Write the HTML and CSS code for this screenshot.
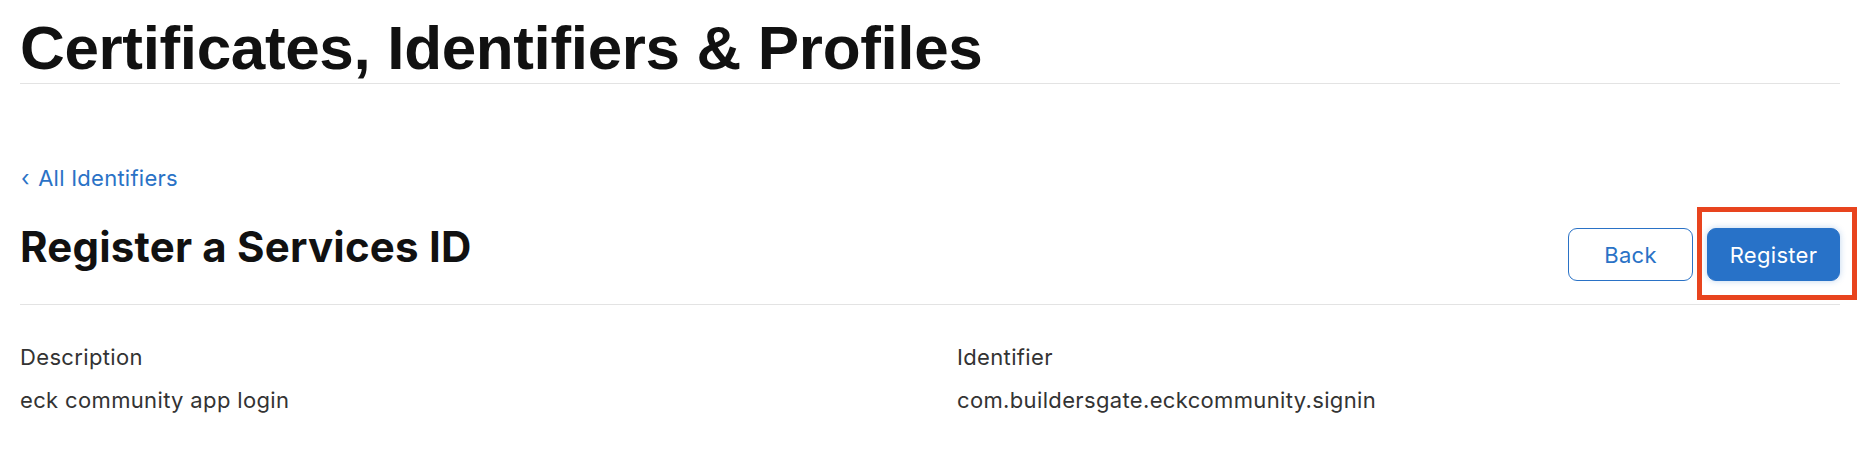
FILE: index.html
```html
<!DOCTYPE html>
<html lang="en">
<head>
<meta charset="utf-8">
<title>Certificates, Identifiers &amp; Profiles</title>
<link rel="stylesheet" href="styles.css">
</head>
<body>
<div class="page">
  <header class="page-header">
    <h1 class="page-title">Certificates, Identifiers &amp; Profiles</h1>
  </header>
  <a class="back-link" href="#"><span class="chev">&#8249;</span> All Identifiers</a>
  <div class="section-head">
    <h2 class="section-title">Register a Services ID</h2>
    <div class="actions">
      <button class="btn btn-secondary">Back</button>
      <div class="highlight-wrap">
        <button class="btn btn-primary">Register</button>
        <span class="highlight-box"></span>
      </div>
    </div>
  </div>
  <div class="details">
    <div class="field">
      <div class="field-label">Description</div>
      <div class="field-value">eck community app login</div>
    </div>
    <div class="field">
      <div class="field-label">Identifier</div>
      <div class="field-value">com.buildersgate.eckcommunity.signin</div>
    </div>
  </div>
</div>
</body>
</html>
```
FILE: styles.css
```css
html, body {
  margin: 0;
  padding: 0;
  background: #ffffff;
}
body {
  font-family: Inter, "Noto Sans", "Liberation Sans", sans-serif;
  color: #333333;
}
.page {
  padding: 13px 30px 0 20px;
}
.page-header {
  border-bottom: 1px solid #e3e3e3;
}
.page-title {
  margin: 0;
  font-family: "Liberation Sans", Arial, sans-serif;
  font-weight: 700;
  font-size: 62px;
  line-height: 70px;
  letter-spacing: -0.35px;
  color: #111111;
}
.back-link {
  display: block;
  margin-top: 81px;
  font-size: 22px;
  line-height: 26px;
  letter-spacing: 0.25px;
  color: #2a72c6;
  text-decoration: none;
}
.chev {
  display: inline-block;
  margin-left: 1px;
  margin-right: 2px;
}
.section-head {
  display: flex;
  justify-content: space-between;
  align-items: flex-start;
  margin-top: 31px;
  padding-bottom: 23px;
  border-bottom: 1px solid #e3e3e3;
}
.section-title {
  margin: 0;
  font-weight: 700;
  font-size: 42px;
  line-height: 50px;
  letter-spacing: 0.2px;
  color: #111111;
}
.actions {
  display: flex;
  gap: 14px;
  margin-top: 6px;
}
.btn {
  height: 53px;
  font-family: inherit;
  font-size: 22px;
  letter-spacing: 0.3px;
  border-radius: 9px;
  cursor: pointer;
  padding: 0;
}
.btn-secondary {
  width: 125px;
  background: #ffffff;
  border: 1px solid #2a72c6;
  color: #2a72c6;
}
.btn-primary {
  width: 133px;
  background: #2872c8;
  border: 1px solid #2872c8;
  color: #ffffff;
  box-shadow: 0 0 6px rgba(40, 114, 200, 0.3);
}
.highlight-wrap {
  position: relative;
  display: flex;
}
.highlight-box {
  position: absolute;
  top: -21px;
  left: -10px;
  right: -17px;
  bottom: -19px;
  border: 5px solid #e8441e;
  pointer-events: none;
}
.details {
  display: grid;
  grid-template-columns: 937px 1fr;
  padding-top: 39px;
}
.field-label {
  font-size: 22px;
  line-height: 26px;
  letter-spacing: 0.35px;
  color: #333333;
}
.field-value {
  margin-top: 17px;
  font-size: 22px;
  line-height: 26px;
  letter-spacing: 0.35px;
  color: #333333;
}
```
